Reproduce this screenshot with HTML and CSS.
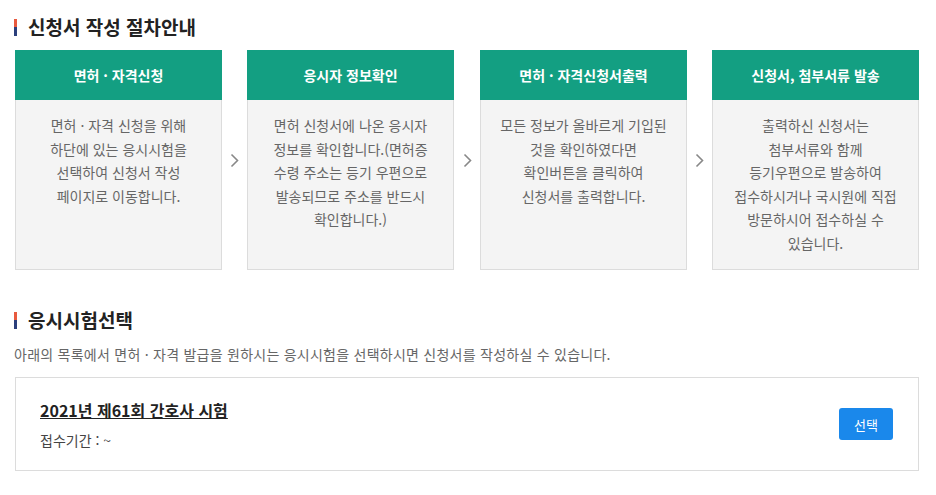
FILE: index.html
```html
<!DOCTYPE html>
<html lang="ko">
<head>
    <meta charset="UTF-8">
    <meta name="viewport" content="width=device-width, initial-scale=1.0">
    <title>신청서 작성 절차안내</title>
    <link rel="stylesheet" href="styles.css">
</head>
<body>
<div class="wrap">
    <h2 class="sec-title">신청서 작성 절차안내</h2>

    <div class="steps">
        <div class="step">
            <div class="step-head">면허 · 자격신청</div>
            <div class="step-body">면허 · 자격 신청을 위해<br>하단에 있는 응시시험을<br>선택하여 신청서 작성<br>페이지로 이동합니다.</div>
        </div>
        <div class="arrow"><svg width="9" height="15" viewBox="0 0 9 15"><polyline points="1.5,1.5 7.5,7.5 1.5,13.5" fill="none" stroke="#888" stroke-width="1.6"/></svg></div>
        <div class="step">
            <div class="step-head">응시자 정보확인</div>
            <div class="step-body">면허 신청서에 나온 응시자<br>정보를 확인합니다.(면허증<br>수령 주소는 등기 우편으로<br>발송되므로 주소를 반드시<br>확인합니다.)</div>
        </div>
        <div class="arrow"><svg width="9" height="15" viewBox="0 0 9 15"><polyline points="1.5,1.5 7.5,7.5 1.5,13.5" fill="none" stroke="#888" stroke-width="1.6"/></svg></div>
        <div class="step">
            <div class="step-head">면허 · 자격신청서출력</div>
            <div class="step-body">모든 정보가 올바르게 기입된<br>것을 확인하였다면<br>확인버튼을 클릭하여<br>신청서를 출력합니다.</div>
        </div>
        <div class="arrow"><svg width="9" height="15" viewBox="0 0 9 15"><polyline points="1.5,1.5 7.5,7.5 1.5,13.5" fill="none" stroke="#888" stroke-width="1.6"/></svg></div>
        <div class="step">
            <div class="step-head">신청서, 첨부서류 발송</div>
            <div class="step-body">출력하신 신청서는<br>첨부서류와 함께<br>등기우편으로 발송하여<br>접수하시거나 국시원에 직접<br>방문하시어 접수하실 수<br>있습니다.</div>
        </div>
    </div>

    <h2 class="sec-title second">응시시험선택</h2>
    <p class="desc">아래의 목록에서 면허 · 자격 발급을 원하시는 응시시험을 선택하시면 신청서를 작성하실 수 있습니다.</p>

    <div class="exam-card">
        <div class="exam-info">
            <a class="exam-name" href="#">2021년 제61회 간호사 시험</a>
            <div class="exam-period">접수기간 : ~</div>
        </div>
        <button class="btn-select">선택</button>
    </div>
</div>
</body>
</html>
```

FILE: styles.css
```css
body {
    margin: 0;
    font-family: "Noto Sans CJK KR", "Noto Sans", sans-serif;
    color: #333;
    background: #fff;
}
.wrap {
    padding: 14px 17px 0 14px;
}
.sec-title {
    display: flex;
    align-items: center;
    gap: 11px;
    margin: 0 0 10px;
    font-size: 19px;
    line-height: 26px;
    font-weight: 700;
    color: #222;
}
.sec-title::before {
    content: "";
    width: 3px;
    height: 17px;
    background: linear-gradient(#e85a3f 50%, #2b3f7c 50%);
}
.sec-title.second {
    margin-top: 37px;
    margin-bottom: 11px;
}
.steps {
    display: grid;
    grid-template-columns: 207px 25px 207px 26px 207px 25px 207px;
    height: 220px;
    margin-left: 1px;
}
.step {
    display: flex;
    flex-direction: column;
}
.step-head {
    height: 50px;
    line-height: 50px;
    text-align: center;
    background: #139f82;
    color: #fff;
    font-size: 14px;
    font-weight: 700;
}
.step-body {
    flex: 1;
    padding-top: 14px;
    background: #f4f4f4;
    border: 1px solid #dcdcdc;
    border-top: none;
    text-align: center;
    font-size: 14px;
    line-height: 23.5px;
    color: #666;
}
.arrow {
    display: flex;
    align-items: center;
    justify-content: center;
}
.desc {
    margin: 0 0 13px;
    font-size: 14px;
    line-height: 20px;
    letter-spacing: 0.25px;
    color: #666;
}
.exam-card {
    display: flex;
    align-items: center;
    justify-content: space-between;
    margin-left: 1px;
    padding: 20px 25px 20px 24px;
    border: 1px solid #dcdcdc;
}
.exam-name {
    display: block;
    font-size: 16px;
    line-height: 24px;
    font-weight: 700;
    color: #222;
    text-decoration: underline;
}
.exam-period {
    margin-top: 8px;
    font-size: 14px;
    line-height: 20px;
    color: #444;
}
.btn-select {
    width: 54px;
    height: 32px;
    border: none;
    border-radius: 3px;
    background: #1a88eb;
    color: #fff;
    font-family: inherit;
    font-size: 13px;
    cursor: pointer;
}
```
